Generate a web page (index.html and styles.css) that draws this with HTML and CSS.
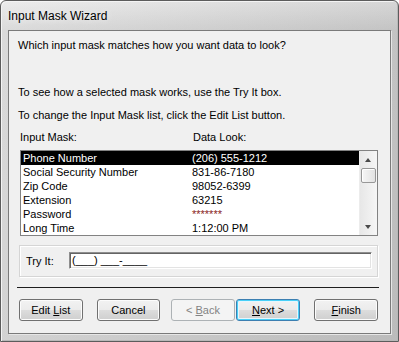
FILE: index.html
```html
<!DOCTYPE html>
<html lang="en">
  <head>
    <meta charset="UTF-8" />
    <title>Input Mask Wizard</title>
    <link rel="stylesheet" href="styles.css">
  </head>
  <body>
    <div class="window">
      <div class="titlebar">
        <span class="title">Input Mask Wizard</span>
      </div>

      <div class="client">
        <p class="intro">Which input mask matches how you want data to look?</p>
        <p class="hint-first">To see how a selected mask works, use the Try It box.</p>
        <p class="hint">To change the Input Mask list, click the Edit List button.</p>

        <div class="columns">
          <span class="col-mask">Input Mask:</span>
          <span class="col-look">Data Look:</span>
        </div>

        <div class="listbox">
          <div class="rows">
            <div class="row selected"><span class="mask">Phone Number</span><span class="look">(206) 555-1212</span></div>
            <div class="row"><span class="mask">Social Security Number</span><span class="look">831-86-7180</span></div>
            <div class="row"><span class="mask">Zip Code</span><span class="look">98052-6399</span></div>
            <div class="row"><span class="mask">Extension</span><span class="look">63215</span></div>
            <div class="row"><span class="mask">Password</span><span class="look stars">*******</span></div>
            <div class="row"><span class="mask">Long Time</span><span class="look">1:12:00 PM</span></div>
          </div>
          <div class="scrollbar">
            <div class="arrow arrow-up"></div>
            <div class="thumb"></div>
            <div class="track"></div>
            <div class="arrow arrow-down"></div>
          </div>
        </div>

        <div class="tryit">
          <span class="tryit-label">Try It:</span>
          <div class="tryit-input">(___) ___-____</div>
        </div>

        <div class="separator"></div>

        <div class="buttons">
          <button class="btn btn-edit">Edit <u>L</u>ist</button>
          <button class="btn btn-cancel">Cancel</button>
          <button class="btn btn-back" disabled>&lt; <u>B</u>ack</button>
          <button class="btn btn-next"><u>N</u>ext &gt;</button>
          <button class="btn btn-finish"><u>F</u>inish</button>
        </div>
      </div>
    </div>
  </body>
</html>
```

FILE: styles.css
```css
body {
  margin: 0;
  padding: 0;
  font-family: "Liberation Sans", Arial, sans-serif;
  font-size: 11px;
  color: #000;
  background-color: #fff;
}

.window {
  width: 399px;
  height: 342px;
  box-sizing: border-box;
  border: 1px solid #5c5c5c;
  border-radius: 6px 6px 0 0;
  padding: 0 7px 7px 7px;
  background: linear-gradient(to right, rgba(255, 255, 255, 0.15), rgba(0, 0, 0, 0.08)),
    linear-gradient(to bottom, #e9e9e9 0, #d4d4d4 29px, #cbcbcb 100%);
  box-shadow: inset 1px 1px 0 #f4f4f4, inset -1px -1px 0 #b8b8b8;
}

.titlebar {
  height: 29px;
  display: flex;
  align-items: center;
}

.title {
  font-size: 12px;
  color: #000;
  text-shadow: 0 0 6px rgba(255, 255, 255, 0.9);
  margin-top: 1px;
}

.client {
  height: 304px;
  box-sizing: border-box;
  border: 1px solid #7a7a7a;
  background-color: #f0f0f0;
  padding: 0 12px 0 9px;
  box-shadow: 1px 1px 0 #e6e6e6;
}

.client p {
  margin: 0;
  line-height: 15px;
}

.client .intro {
  padding-top: 7px;
}

.client .hint-first {
  margin-top: 32px;
}

.client .hint {
  margin-top: 8px;
}

.columns {
  display: flex;
  margin-top: 7px;
  line-height: 15px;
}

.col-mask {
  margin-left: 2px;
  width: 173px;
}

.listbox {
  display: flex;
  margin-top: 5px;
  margin-left: 2px;
  height: 86px;
  box-sizing: border-box;
  border: 1px solid #828282;
  background-color: #fff;
}

.rows {
  flex: 1;
}

.row {
  display: flex;
  height: 14px;
  line-height: 14px;
  white-space: nowrap;
}

.row.selected {
  background-color: #000;
  color: #fff;
}

.mask {
  width: 169px;
  padding-left: 2px;
}

.stars {
  color: #8a2424;
}

.scrollbar {
  width: 17px;
  display: flex;
  flex-direction: column;
  background: linear-gradient(to right, #e7e7e7, #f6f6f6);
  border-left: 1px solid #ececec;
}

.arrow {
  height: 17px;
  position: relative;
}

.arrow::after {
  content: "";
  position: absolute;
  left: 5px;
  border-left: 3.5px solid transparent;
  border-right: 3.5px solid transparent;
}

.arrow-up::after {
  top: 7px;
  border-bottom: 4px solid #4a4a4a;
}

.arrow-down::after {
  top: 7px;
  border-top: 4px solid #4a4a4a;
}

.thumb {
  height: 15px;
  margin: 0 1px;
  box-sizing: border-box;
  border: 1px solid #979797;
  border-radius: 2px;
  background: linear-gradient(to right, #f6f6f6, #e2e2e2);
  box-shadow: inset 1px 1px 0 #fff;
}

.track {
  flex: 1;
}

.tryit {
  display: flex;
  align-items: center;
  margin-top: 9px;
  margin-left: 1px;
  height: 32px;
  box-sizing: border-box;
  border: 1px solid #d5d5d5;
  box-shadow: inset 1px 1px 0 #fff, 1px 1px 0 #fff;
}

.tryit-label {
  margin-left: 6px;
  width: 43px;
}

.tryit-input {
  width: 303px;
  height: 17px;
  box-sizing: border-box;
  border: 1px solid;
  border-color: #8e8e8e #fff #fff #8e8e8e;
  box-shadow: inset 1px 1px 0 #646464, inset -1px -1px 0 #e3e3e3;
  background-color: #fff;
  padding-left: 2px;
  line-height: 15px;
  margin-top: -2px;
}

.separator {
  margin-top: 10px;
  margin-left: -1px;
  width: 362px;
  height: 1px;
  background-color: #1e1e1e;
}

.buttons {
  display: flex;
  margin-top: 11px;
}

.btn {
  width: 64px;
  height: 22px;
  padding: 0;
  font-family: inherit;
  font-size: 11px;
  color: #000;
  border: 1px solid #707070;
  border-radius: 3px;
  background: linear-gradient(to bottom, #f2f2f2 0, #ebebeb 50%, #dddddd 50%, #cfcfcf 100%);
  box-shadow: inset 0 0 0 1px #fcfcfc;
}

.btn-edit {
  margin-left: 1px;
}

.btn-cancel {
  margin-left: 14px;
}

.btn-back {
  margin-left: 11px;
  color: #838383;
  border-color: #adb2b5;
  background: #f4f4f4;
  box-shadow: none;
}

.btn-next {
  margin-left: 1px;
  width: 65px;
  border-color: #3c7fb1;
  box-shadow: inset 0 0 0 1px #48d0f8, inset 0 0 0 2px #e6f6fd;
}

.btn-finish {
  margin-left: 14px;
}
```
